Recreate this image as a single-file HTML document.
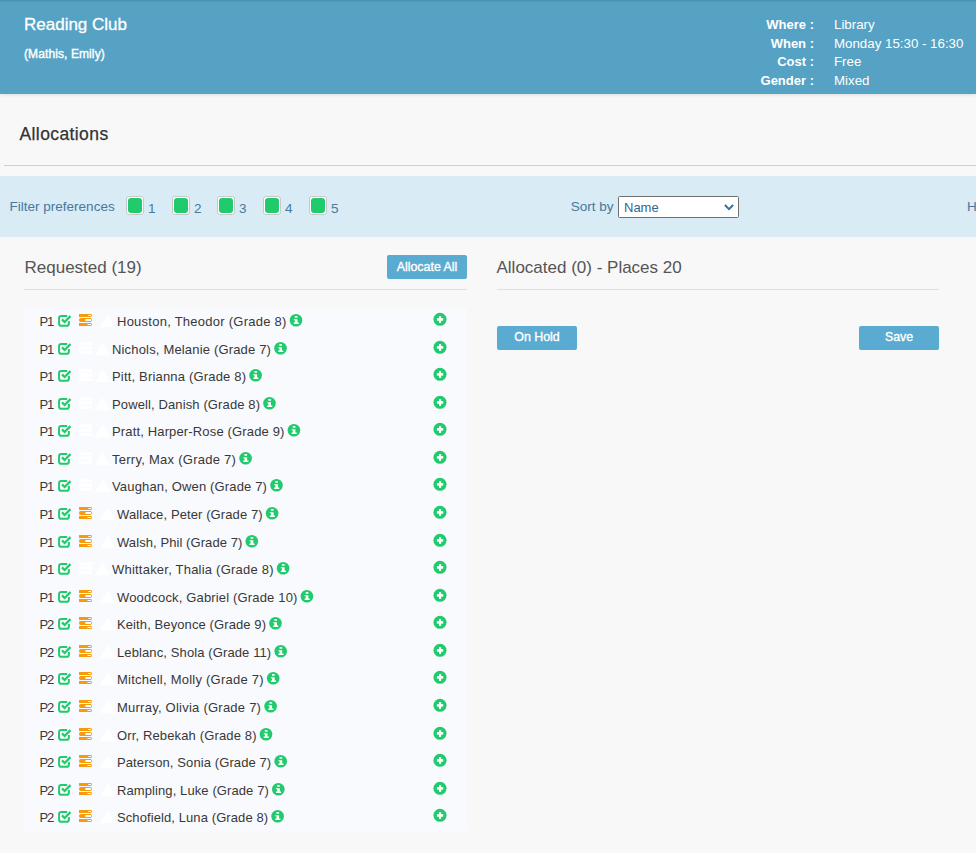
<!DOCTYPE html>
<html><head><meta charset="utf-8">
<style>
*{margin:0;padding:0;box-sizing:border-box}
html,body{width:976px;height:853px;overflow:hidden;background:#f8f8f8;font-family:"Liberation Sans",sans-serif;color:#333}
.a{position:absolute;white-space:nowrap;line-height:1}
#hdr{position:absolute;left:0;top:0;width:976px;height:94px;background:linear-gradient(#4a92b2 0,#4a92b2 1px,#509bbd 1px,#509bbd 2px,#55a2c5 2px);box-shadow:0 1px 4px rgba(0,0,0,.11)}
#hdr .w{color:#fff}
.lbl{font-weight:bold;font-size:13px;color:#fff;text-align:right;width:120px}
.val{font-size:13.3px;color:#fff}
#hr1{position:absolute;left:4px;top:165px;width:972px;height:1px;background:#cfcfcf}
#fbar{position:absolute;left:0;top:176px;width:976px;height:61px;background:#d9ebf5}
.fb{color:#46799c;font-size:13.5px}
.cb{position:absolute;width:18.4px;height:18.4px;border:1px solid #c9c9c9;border-radius:3px;background:#fff}
.cb i{position:absolute;left:1px;top:1px;width:14.4px;height:14.4px;background:#21cb6d;border-radius:3px}
.btn{position:absolute;background:#5aabd1;border-radius:2px;color:#fff;font-size:12.4px;-webkit-text-stroke:0.35px #fff;text-align:center}
#list{position:absolute;left:24px;top:308px;width:443px;height:523px;background:#f8fafd}
.h17{font-size:17px;color:#555}
.hr2{position:absolute;height:1px;background:#e1e1e1}
.nm{position:absolute;white-space:nowrap;line-height:13px;font-size:13px;color:#383838}
</style></head><body>
<div id="hdr">
  <div class="a w" style="left:24px;top:15.6px;font-size:17px;-webkit-text-stroke:0.3px #fff">Reading Club</div>
  <div class="a w" style="left:24px;top:47.6px;font-size:12px;letter-spacing:0.1px;-webkit-text-stroke:0.4px #fff">(Mathis, Emily)</div>
  <div class="a lbl" style="left:694px;top:18px">Where :</div>
  <div class="a lbl" style="left:694px;top:37px">When :</div>
  <div class="a lbl" style="left:694px;top:55px">Cost :</div>
  <div class="a lbl" style="left:694px;top:74px">Gender :</div>
  <div class="a val" style="left:834px;top:18px">Library</div>
  <div class="a val" style="left:834px;top:37px">Monday 15:30 - 16:30</div>
  <div class="a val" style="left:834px;top:55px">Free</div>
  <div class="a val" style="left:834px;top:74px">Mixed</div>
</div>
<div class="a" style="left:19.5px;top:125.5px;font-size:17.5px;letter-spacing:0.4px;color:#333;-webkit-text-stroke:0.25px #333">Allocations</div>
<div id="hr1"></div>
<div id="fbar">
  <div class="a fb" style="left:9.6px;top:24px">Filter preferences</div>
  <div class="cb" style="left:126px;top:20.2px"><i></i></div><div class="a fb" style="left:148px;top:25.8px">1</div>
  <div class="cb" style="left:172px;top:20.2px"><i></i></div><div class="a fb" style="left:194px;top:25.8px">2</div>
  <div class="cb" style="left:217px;top:20.2px"><i></i></div><div class="a fb" style="left:239px;top:25.8px">3</div>
  <div class="cb" style="left:263px;top:20.2px"><i></i></div><div class="a fb" style="left:285px;top:25.8px">4</div>
  <div class="cb" style="left:309px;top:20.2px"><i></i></div><div class="a fb" style="left:331px;top:25.8px">5</div>
  <div class="a fb" style="left:570.7px;top:24px">Sort by</div>
  <div style="position:absolute;left:618px;top:20px;width:121px;height:22px;background:#fff;border:1px solid #707070;border-radius:1.5px"></div>
  <div class="a fb" style="left:624px;top:24.5px;font-size:13px;color:#2d6892">Name</div>
  <div class="a fb" style="left:967px;top:24px">H</div>
  <svg style="position:absolute;left:720px;top:24px" width="18" height="14" viewBox="720 200 18 14"><path d="M724.9 205L729 209.1L733.1 205" fill="none" stroke="#33729a" stroke-width="2"/></svg>
</div>
<div class="a h17" style="left:24.5px;top:259px">Requested (19)</div>
<div class="btn" style="left:387px;top:255px;width:80px;height:24px;line-height:24px">Allocate All</div>
<div class="hr2" style="left:24px;top:289px;width:443px"></div>
<div class="a h17" style="left:496.5px;top:259px">Allocated (0) - Places 20</div>
<div class="hr2" style="left:497px;top:289px;width:442px"></div>
<div class="btn" style="left:497px;top:326px;width:80px;height:24px;line-height:23px">On Hold</div>
<div class="btn" style="left:859px;top:326px;width:80px;height:24px;line-height:23px">Save</div>
<div id="list"></div>
<div class="nm" style="left:39.5px;top:314.60px;letter-spacing:-1.2px">P1</div>
<div class="nm" style="left:117px;top:314.60px;letter-spacing:0.251px">Houston, Theodor (Grade 8)</div>
<div class="nm" style="left:39.5px;top:342.60px;letter-spacing:-1.2px">P1</div>
<div class="nm" style="left:112px;top:342.60px;letter-spacing:0.172px">Nichols, Melanie (Grade 7)</div>
<div class="nm" style="left:39.5px;top:369.60px;letter-spacing:-1.2px">P1</div>
<div class="nm" style="left:112px;top:369.60px;letter-spacing:0.180px">Pitt, Brianna (Grade 8)</div>
<div class="nm" style="left:39.5px;top:397.60px;letter-spacing:-1.2px">P1</div>
<div class="nm" style="left:112px;top:397.60px;letter-spacing:0.120px">Powell, Danish (Grade 8)</div>
<div class="nm" style="left:39.5px;top:424.60px;letter-spacing:-1.2px">P1</div>
<div class="nm" style="left:112px;top:424.60px;letter-spacing:0.149px">Pratt, Harper-Rose (Grade 9)</div>
<div class="nm" style="left:39.5px;top:452.60px;letter-spacing:-1.2px">P1</div>
<div class="nm" style="left:112px;top:452.60px;letter-spacing:0.263px">Terry, Max (Grade 7)</div>
<div class="nm" style="left:39.5px;top:479.60px;letter-spacing:-1.2px">P1</div>
<div class="nm" style="left:112px;top:479.60px;letter-spacing:0.156px">Vaughan, Owen (Grade 7)</div>
<div class="nm" style="left:39.5px;top:507.60px;letter-spacing:-1.2px">P1</div>
<div class="nm" style="left:117px;top:507.60px;letter-spacing:0.100px">Wallace, Peter (Grade 7)</div>
<div class="nm" style="left:39.5px;top:535.60px;letter-spacing:-1.2px">P1</div>
<div class="nm" style="left:117px;top:535.60px;letter-spacing:0.077px">Walsh, Phil (Grade 7)</div>
<div class="nm" style="left:39.5px;top:562.60px;letter-spacing:-1.2px">P1</div>
<div class="nm" style="left:112px;top:562.60px;letter-spacing:0.217px">Whittaker, Thalia (Grade 8)</div>
<div class="nm" style="left:39.5px;top:590.60px;letter-spacing:-1.2px">P1</div>
<div class="nm" style="left:117px;top:590.60px;letter-spacing:0.159px">Woodcock, Gabriel (Grade 10)</div>
<div class="nm" style="left:39.5px;top:617.60px;letter-spacing:-1.2px">P2</div>
<div class="nm" style="left:117px;top:617.60px;letter-spacing:0.100px">Keith, Beyonce (Grade 9)</div>
<div class="nm" style="left:39.5px;top:645.60px;letter-spacing:-1.2px">P2</div>
<div class="nm" style="left:117px;top:645.60px;letter-spacing:0.111px">Leblanc, Shola (Grade 11)</div>
<div class="nm" style="left:39.5px;top:672.60px;letter-spacing:-1.2px">P2</div>
<div class="nm" style="left:117px;top:672.60px;letter-spacing:0.237px">Mitchell, Molly (Grade 7)</div>
<div class="nm" style="left:39.5px;top:700.60px;letter-spacing:-1.2px">P2</div>
<div class="nm" style="left:117px;top:700.60px;letter-spacing:0.239px">Murray, Olivia (Grade 7)</div>
<div class="nm" style="left:39.5px;top:728.60px;letter-spacing:-1.2px">P2</div>
<div class="nm" style="left:117px;top:728.60px;letter-spacing:0.138px">Orr, Rebekah (Grade 8)</div>
<div class="nm" style="left:39.5px;top:755.60px;letter-spacing:-1.2px">P2</div>
<div class="nm" style="left:117px;top:755.60px;letter-spacing:0.102px">Paterson, Sonia (Grade 7)</div>
<div class="nm" style="left:39.5px;top:783.60px;letter-spacing:-1.2px">P2</div>
<div class="nm" style="left:117px;top:783.60px;letter-spacing:0.097px">Rampling, Luke (Grade 7)</div>
<div class="nm" style="left:39.5px;top:810.60px;letter-spacing:-1.2px">P2</div>
<div class="nm" style="left:117px;top:810.60px;letter-spacing:0.093px">Schofield, Luna (Grade 8)</div>
<svg id="ic" width="976" height="853" viewBox="0 0 976 853" style="position:absolute;left:0;top:0"><defs>
<g id="chk"><path d="M67.2 315.95H61.4Q59.05 315.95 59.05 318.3V323.4Q59.05 325.8 61.4 325.8H66.6Q68.9 325.8 68.9 323.4V320.9" fill="none" stroke="#21cb6d" stroke-width="1.95"/><path d="M62 319.4L64.6 322L70.5 316.1" fill="none" stroke="#21cb6d" stroke-width="2.25"/></g>
<g id="srvO"><path d="M79 314H90.6Q91.9 314 91.9 315.4Q91.9 316.9 90.6 316.9H79ZM80.6 318H90.4Q91.9 318 91.9 320Q91.9 322 90.4 322H80.6Q79 322 79 320Q79 318 80.6 318ZM79 323H90.6Q91.9 323 91.9 324.4Q91.9 326 90.6 326H79Z" fill="#f49c0e"/><path d="M88.4 315.1H91V316H88.4Q88.1 315.55 88.4 315.1Z" fill="#fff"/><path d="M85.6 319.1H91V320.9H85.6Q85 320 85.6 319.1Z" fill="#fff"/><path d="M87.6 323.9H91V325H87.6Q87.1 324.45 87.6 323.9Z" fill="#fff"/></g>
<g id="srvW"><rect x="79" y="314.3" width="13" height="3" fill="#fff"/><rect x="79" y="318.3" width="13" height="3.6" fill="#fff"/><rect x="79" y="323.1" width="13" height="2.9" fill="#fff"/></g>
<g id="tri"><path d="M102.6 314.4L110.4 327.2H94.9Z" fill="#fff"/></g>
<g id="inf"><circle cx="296" cy="320.3" r="6.3" fill="#21cb6d"/><rect x="294.8" y="316.1" width="2.7" height="1.65" fill="#fff"/><path d="M293.75 319.2H297.5V322.4H298.8V323.9H293.75V322.4H294.9V320.3H293.75Z" fill="#fff"/></g>
<g id="pls"><circle cx="440" cy="319.3" r="6.55" fill="#21cb6d"/><rect x="436.9" y="318.1" width="6.3" height="2.6" fill="#fff"/><rect x="439" y="316.1" width="2.1" height="6.8" fill="#fff"/></g>
</defs>
<g transform="translate(0 0.00)"><use href="#chk"/><use href="#srvO"/><use href="#tri" x="5"/><use href="#inf" x="0.00"/><use href="#pls"/></g>
<g transform="translate(0 28.00)"><use href="#chk"/><use href="#srvW"/><use href="#tri" x="0"/><use href="#inf" x="-15.50"/><use href="#pls"/></g>
<g transform="translate(0 55.00)"><use href="#chk"/><use href="#srvW"/><use href="#tri" x="0"/><use href="#inf" x="-40.40"/><use href="#pls"/></g>
<g transform="translate(0 83.00)"><use href="#chk"/><use href="#srvW"/><use href="#tri" x="0"/><use href="#inf" x="-26.50"/><use href="#pls"/></g>
<g transform="translate(0 110.00)"><use href="#chk"/><use href="#srvW"/><use href="#tri" x="0"/><use href="#inf" x="-2.10"/><use href="#pls"/></g>
<g transform="translate(0 138.00)"><use href="#chk"/><use href="#srvW"/><use href="#tri" x="0"/><use href="#inf" x="-50.40"/><use href="#pls"/></g>
<g transform="translate(0 165.00)"><use href="#chk"/><use href="#srvW"/><use href="#tri" x="0"/><use href="#inf" x="-19.50"/><use href="#pls"/></g>
<g transform="translate(0 193.00)"><use href="#chk"/><use href="#srvO"/><use href="#tri" x="5"/><use href="#inf" x="-23.90"/><use href="#pls"/></g>
<g transform="translate(0 221.00)"><use href="#chk"/><use href="#srvO"/><use href="#tri" x="5"/><use href="#inf" x="-44.20"/><use href="#pls"/></g>
<g transform="translate(0 248.00)"><use href="#chk"/><use href="#srvW"/><use href="#tri" x="0"/><use href="#inf" x="-12.90"/><use href="#pls"/></g>
<g transform="translate(0 276.00)"><use href="#chk"/><use href="#srvO"/><use href="#tri" x="5"/><use href="#inf" x="10.90"/><use href="#pls"/></g>
<g transform="translate(0 303.00)"><use href="#chk"/><use href="#srvO"/><use href="#tri" x="5"/><use href="#inf" x="-20.50"/><use href="#pls"/></g>
<g transform="translate(0 331.00)"><use href="#chk"/><use href="#srvO"/><use href="#tri" x="5"/><use href="#inf" x="-15.30"/><use href="#pls"/></g>
<g transform="translate(0 358.00)"><use href="#chk"/><use href="#srvO"/><use href="#tri" x="5"/><use href="#inf" x="-22.80"/><use href="#pls"/></g>
<g transform="translate(0 386.00)"><use href="#chk"/><use href="#srvO"/><use href="#tri" x="5"/><use href="#inf" x="-25.40"/><use href="#pls"/></g>
<g transform="translate(0 414.00)"><use href="#chk"/><use href="#srvO"/><use href="#tri" x="5"/><use href="#inf" x="-30.00"/><use href="#pls"/></g>
<g transform="translate(0 441.00)"><use href="#chk"/><use href="#srvO"/><use href="#tri" x="5"/><use href="#inf" x="-15.30"/><use href="#pls"/></g>
<g transform="translate(0 469.00)"><use href="#chk"/><use href="#srvO"/><use href="#tri" x="5"/><use href="#inf" x="-17.70"/><use href="#pls"/></g>
<g transform="translate(0 496.00)"><use href="#chk"/><use href="#srvO"/><use href="#tri" x="5"/><use href="#inf" x="-18.40"/><use href="#pls"/></g></svg>
</body></html>
